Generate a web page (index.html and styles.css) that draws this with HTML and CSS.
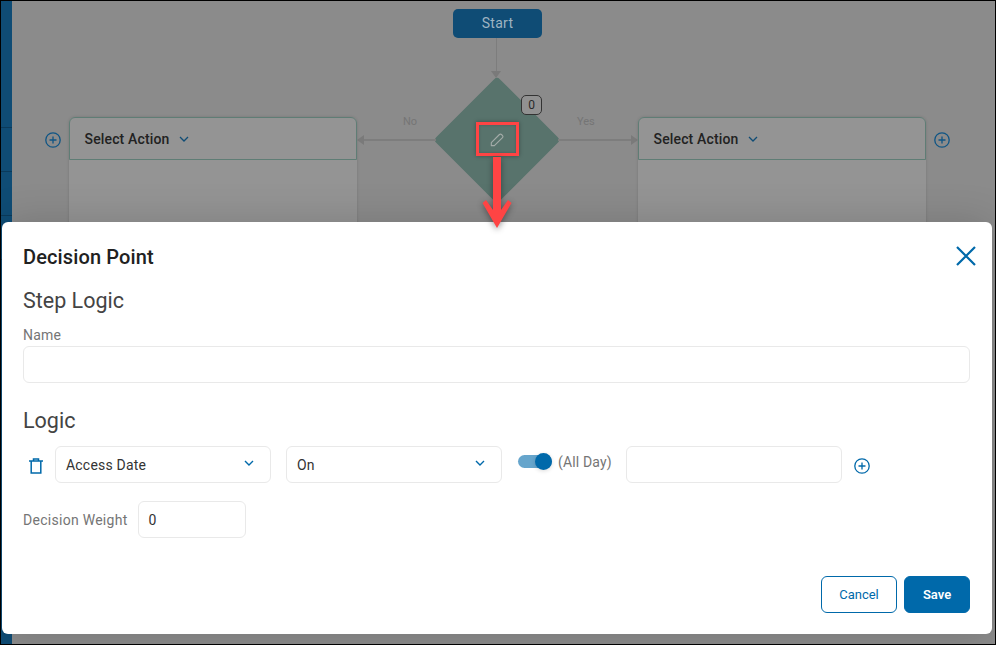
FILE: index.html
```html
<!DOCTYPE html>
<html lang="en">
<head>
<meta charset="utf-8">
<title>Decision Point</title>
<link rel="stylesheet" href="styles.css">
</head>
<body>
<div class="screen">
  <div class="sidebar"><i></i><i></i><i></i><i></i></div>

  <div class="canvas">
    <div class="node start">Start</div>
    <div class="vline"></div>
    <div class="arrowhead down"></div>

    <div class="diamond"></div>
    <svg class="pencil" viewBox="0 0 16 16" width="14" height="14" fill="none" stroke="#a3aba8" stroke-width="1.3" stroke-linejoin="round"><path d="M1.500 11 10.800 1.700a1.600 1.600 0 0 1 2.300 0l1.200 1.200a1.600 1.600 0 0 1 0 2.300L5 14.500H1.500z"/></svg>
    <div class="badge">0</div>

    <div class="hline left"></div>
    <div class="arrowhead tip-left"></div>
    <div class="hline right"></div>
    <div class="arrowhead tip-right"></div>
    <span class="edge no">No</span>
    <span class="edge yes">Yes</span>

    <div class="card card-left">
      <div class="card-head">Select Action
        <svg class="chev" viewBox="0 0 10 6" width="10" height="6" fill="none" stroke="#0f4c75" stroke-width="1.3"><path d="M1 1l4 4 4-4"/></svg>
      </div>
    </div>
    <div class="card card-right">
      <div class="card-head">Select Action
        <svg class="chev" viewBox="0 0 10 6" width="10" height="6" fill="none" stroke="#0f4c75" stroke-width="1.3"><path d="M1 1l4 4 4-4"/></svg>
      </div>
    </div>
    <svg class="add add-left" viewBox="0 0 16 16" width="16" height="16" fill="none" stroke="#0f5585" stroke-width="1.3"><circle cx="8" cy="8" r="7.2"/><path d="M8 4.500v7M4.500 8h7"/></svg>
    <svg class="add add-right" viewBox="0 0 16 16" width="16" height="16" fill="none" stroke="#0f5585" stroke-width="1.3"><circle cx="8" cy="8" r="7.2"/><path d="M8 4.500v7M4.500 8h7"/></svg>
  </div>

  <section class="modal">
    <header class="modal-head">
      <h2>Decision Point</h2>
      <svg class="close" viewBox="0 0 20 20" width="20" height="20" fill="none" stroke="#0069aa" stroke-width="2.2"><path d="M1 1l18 18M19 1 1 19"/></svg>
    </header>
    <h3 class="step">Step Logic</h3>
    <label class="field-label">Name</label>
    <div class="input full"></div>
    <h3 class="logic">Logic</h3>
    <div class="rule">
      <svg class="trash" viewBox="0 0 14 16" width="14" height="16" fill="none" stroke="#0069aa" stroke-width="1.500"><path d="M0 3h14M4.500 3V1h5v2M2.200 3v12h9.600V3"/></svg>
      <div class="input select">Access Date<svg viewBox="0 0 10 6" width="10" height="6" fill="none" stroke="#0069aa" stroke-width="1.400"><path d="M1 1l4 4 4-4"/></svg></div>
      <div class="input select">On<svg viewBox="0 0 10 6" width="10" height="6" fill="none" stroke="#0069aa" stroke-width="1.400"><path d="M1 1l4 4 4-4"/></svg></div>
      <div class="toggle"><span class="thumb"></span></div>
      <span class="allday">(All Day)</span>
      <div class="input date"></div>
      <svg class="rule-add" viewBox="0 0 16 16" width="16" height="16" fill="none" stroke="#0069aa" stroke-width="1.300"><circle cx="8" cy="8" r="7.200"/><path d="M8 4.500v7M4.500 8h7"/></svg>
    </div>
    <div class="weight">
      <label>Decision Weight</label>
      <div class="input small">0</div>
    </div>
    <footer class="actions">
      <button class="btn ghost">Cancel</button>
      <button class="btn solid">Save</button>
    </footer>
  </section>

  <div class="callout-box"></div>
  <svg class="callout-arrow" viewBox="0 0 30 74" width="30" height="74">
    <path d="M11 1h8V54L26 44l3.500 3L15 72 0.500 47 4 44l7 10z" fill="#ff4444"/>
  </svg>
</div>
</body>
</html>
```
FILE: styles.css
```css
* { box-sizing: border-box; }
html, body { margin: 0; padding: 0; }
body { font-family: Roboto, "Liberation Sans", sans-serif; background: #000; }

.screen {
  position: relative;
  width: 996px;
  height: 645px;
  overflow: hidden;
  border: 1px solid #000;
  background: #8b8b8b;
}

.sidebar {
  position: absolute;
  left: 0; top: 0; bottom: 0;
  width: 11px;
  background: #0f4c75;
  padding-top: 126px;
  display: flex;
  flex-direction: column;
  gap: 43px;
}
.sidebar i { display: block; height: 1px; background: #0b3a5a; }

.canvas { position: absolute; inset: 0; }

.node.start {
  position: absolute;
  left: 452px; top: 8px;
  width: 89px; height: 29px;
  background: #0f4c75;
  color: #9fb4c2;
  border-radius: 5px;
  font-size: 14px;
  font-weight: 400;
  letter-spacing: .3px;
  line-height: 28px;
  text-align: center;
}
.vline { position: absolute; left: 495px; top: 37px; width: 1px; height: 34px; background: #7d7d7d; }
.arrowhead { position: absolute; width: 0; height: 0; }
.arrowhead.down { left: 490px; top: 70px; border: 5px solid transparent; border-top: 7px solid #7a7a7a; border-bottom: 0; }
.arrowhead.tip-left { left: 356px; top: 134px; border: 5px solid transparent; border-right: 7px solid #7a7a7a; border-left: 0; }
.arrowhead.tip-right { left: 630px; top: 134px; border: 5px solid transparent; border-left: 7px solid #7a7a7a; border-right: 0; }

.diamond {
  position: absolute;
  left: 451px; top: 94px;
  width: 90px; height: 90px;
  background: #58736c;
  border-radius: 4px;
  transform: rotate(45deg);
}
.pencil { position: absolute; left: 489px; top: 132px; }
.badge {
  position: absolute;
  left: 520px; top: 94px;
  width: 21px; height: 20px;
  border: 1px solid #333;
  border-radius: 5px;
  background: #919191;
  color: #2a2a2a;
  font-size: 12px;
  line-height: 18px;
  text-align: center;
}

.hline { position: absolute; top: 138px; height: 2px; background: #7d7d7d; }
.hline.left { left: 360px; width: 75px; }
.hline.right { left: 557px; width: 74px; }
.edge { position: absolute; top: 114px; font-size: 11px; color: #757575; line-height: 14px; }
.edge.no { left: 402px; }
.edge.yes { left: 576px; }

.card {
  position: absolute;
  top: 116px;
  width: 288px;
  height: 130px;
  background: #949494;
  border-radius: 6px 6px 0 0;
  box-shadow: 0 0 3px rgba(0,0,0,.15);
}
.card-left { left: 68px; }
.card-right { left: 637px; }
.card-head {
  height: 43px;
  border: 1px solid #5f7d75;
  border-radius: 6px 6px 0 0;
  padding-left: 14.500px;
  display: flex;
  align-items: center;
  gap: 9px;
  font-size: 14px;
  font-weight: 500;
  letter-spacing: .15px;
  color: #222;
}
.add { position: absolute; top: 131px; }
.add-left { left: 44px; }
.add-right { left: 933px; }

.modal {
  position: absolute;
  left: 1px; top: 221px;
  width: 990px; height: 412px;
  background: #fff;
  border-radius: 6px;
  padding: 0 21px;
  display: flex;
  flex-direction: column;
  color: #333;
  box-shadow: 0 0 40px rgba(0,0,0,.16);
}
.modal-head {
  display: flex;
  justify-content: space-between;
  padding-top: 24px;
  height: 62px;
}
.modal-head h2 { margin: 0; font-size: 20px; font-weight: 500; line-height: 22px; color: #212121; letter-spacing: .13px; }
.close { margin-right: -5px; }
h3 { margin: 0; font-size: 21.500px; font-weight: 400; color: #444; line-height: 26px; }
.step { margin-top: 4px; }
.field-label, .weight label { font-size: 14px; color: #757575; line-height: 16px; }
.field-label { margin-top: 13px; display: block; letter-spacing: .2px; }
.weight label { letter-spacing: .28px; }
.input {
  height: 37px;
  border: 1px solid #e9e9e9;
  border-radius: 6px;
  background: #fff;
  font-size: 14px;
  letter-spacing: .2px;
  color: #333;
  display: flex;
  align-items: center;
  padding: 0 10px;
}
.input.full { margin-top: 3px; width: 947px; }
.logic { margin-top: 25px; }
.rule { display: flex; align-items: center; margin-top: 12px; height: 37px; }
.trash { margin-left: 6px; margin-top: 3px; flex: none; }
.select { width: 216px; justify-content: space-between; padding-right: 16px; margin-right: 15px; }
.trash + .select { margin-left: 12px; }
.select svg { margin-top: -3px; }
.toggle {
  position: relative;
  margin-left: 1px;
  margin-top: -7px;
  width: 34px; height: 13px;
  border-radius: 7px;
  background: #66a5cc;
  flex: none;
}
.thumb {
  position: absolute;
  right: 0; top: -2px;
  width: 17px; height: 17px;
  border-radius: 50%;
  background: #0069aa;
  box-shadow: 0 1px 4px rgba(0,0,0,.15);
}
.allday { margin-left: 6px; font-size: 14px; letter-spacing: .15px; color: #757575; margin-top: -5px; width: 53px; flex: none; white-space: nowrap; }
.date { width: 216px; margin-left: 15px; }
.rule-add { margin-left: 12px; margin-top: 3px; flex: none; }
.weight { display: flex; align-items: center; margin-top: 18px; gap: 10px; }
.weight .input { width: 108px; }
.actions { margin-top: auto; padding-bottom: 21px; padding-right: 1px; display: flex; justify-content: flex-end; gap: 7px; }
.btn {
  height: 37px;
  border-radius: 6px;
  font-family: inherit;
  font-size: 13px;
  padding: 0;
}
.ghost { width: 76px; background: #fff; border: 1px solid #0069aa; color: #0069aa; font-weight: 400; }
.solid { width: 66px; background: #0069aa; border: 1px solid #0069aa; color: #fff; font-weight: 600; }

.callout-box {
  position: absolute;
  left: 475px; top: 121px;
  width: 43px; height: 34px;
  border: 3px solid #ff4444;
  box-shadow: 0 0 4px rgba(0,0,0,.35), inset 0 0 3px rgba(0,0,0,.2);
}
.callout-arrow {
  position: absolute;
  left: 481px; top: 155px;
  filter: drop-shadow(0 2px 3px rgba(0,0,0,.4));
}
```
